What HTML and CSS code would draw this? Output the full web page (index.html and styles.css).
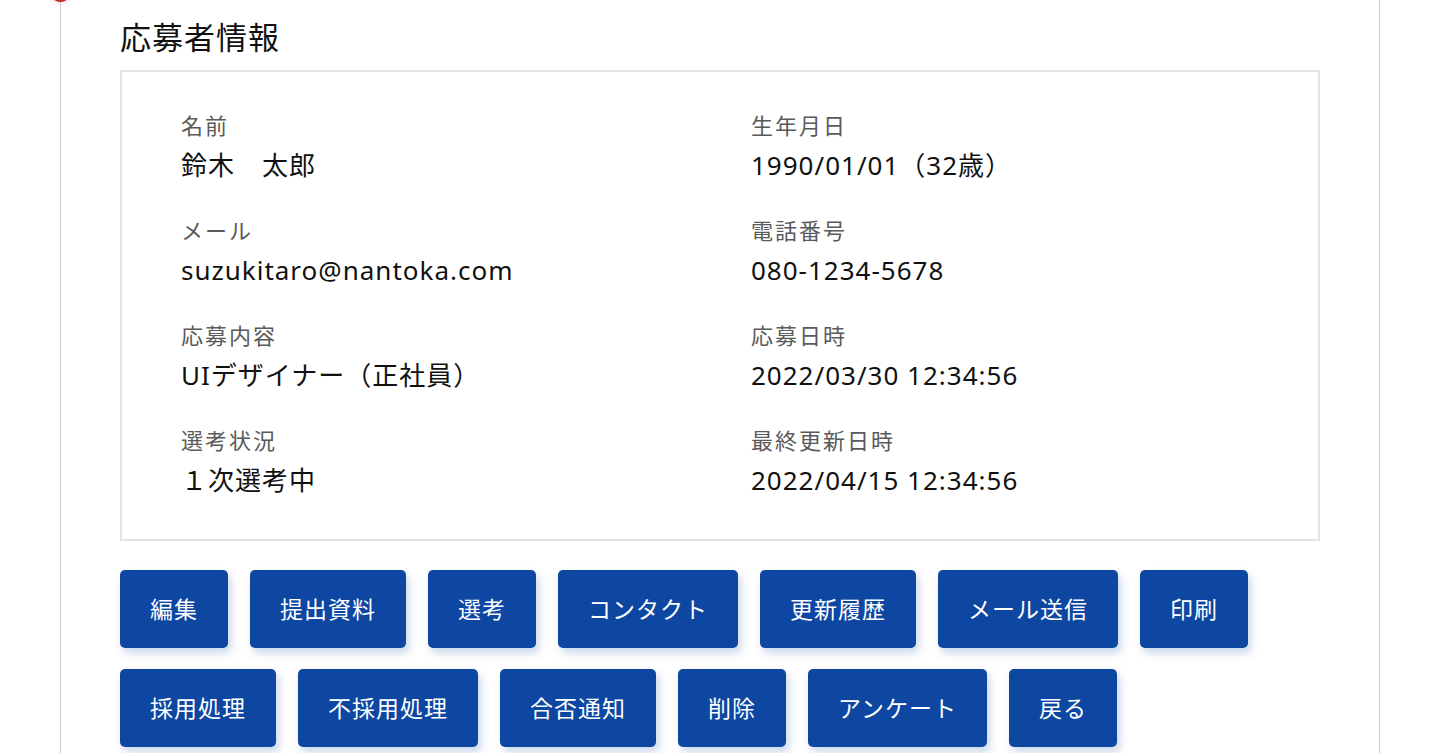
FILE: index.html
```html
<!DOCTYPE html>
<html lang="ja">
<head>
<meta charset="utf-8">
<title>応募者情報</title>
<link rel="stylesheet" href="styles.css">
</head>
<body>
<div class="panel">
  <span class="dot"></span>
  <h1 class="title">応募者情報</h1>
  <section class="card">
    <div class="field"><div class="label">名前</div><div class="value">鈴木　太郎</div></div>
    <div class="field"><div class="label">生年月日</div><div class="value">1990/01/01（32歳）</div></div>
    <div class="field"><div class="label">メール</div><div class="value">suzukitaro@nantoka.com</div></div>
    <div class="field"><div class="label">電話番号</div><div class="value">080-1234-5678</div></div>
    <div class="field"><div class="label">応募内容</div><div class="value">UIデザイナー（正社員）</div></div>
    <div class="field"><div class="label">応募日時</div><div class="value">2022/03/30 12:34:56</div></div>
    <div class="field"><div class="label">選考状況</div><div class="value">１次選考中</div></div>
    <div class="field"><div class="label">最終更新日時</div><div class="value">2022/04/15 12:34:56</div></div>
  </section>
  <div class="actions">
    <button class="btn">編集</button>
    <button class="btn">提出資料</button>
    <button class="btn">選考</button>
    <button class="btn">コンタクト</button>
    <button class="btn">更新履歴</button>
    <button class="btn">メール送信</button>
    <button class="btn">印刷</button>
    <button class="btn">採用処理</button>
    <button class="btn">不採用処理</button>
    <button class="btn">合否通知</button>
    <button class="btn">削除</button>
    <button class="btn">アンケート</button>
    <button class="btn">戻る</button>
  </div>
</div>
</body>
</html>
```

FILE: styles.css
```css
html, body {
  margin: 0;
  padding: 0;
  background: #ffffff;
  height: 100%;
  overflow: hidden;
}
body {
  font-family: "Noto Sans", "Noto Sans CJK JP", sans-serif;
  color: #111111;
}
.panel {
  position: relative;
  box-sizing: border-box;
  margin-left: 60px;
  width: 1320px;
  min-height: 100%;
  border-left: 1px solid #cccccc;
  border-right: 1px solid #cccccc;
  padding: 17px 0 0 59px;
}
.dot {
  position: absolute;
  left: -11px;
  top: -19px;
  width: 21px;
  height: 21px;
  border-radius: 50%;
  background: #c62828;
  box-shadow: 0 0 6px rgba(198, 40, 40, 0.25);
}
.title {
  margin: 0 0 13px;
  font-size: 31px;
  line-height: 40px;
  font-weight: 400;
  letter-spacing: 1px;
  color: #111111;
}
.card {
  box-sizing: border-box;
  width: 1200px;
  border: 2px solid #e3e3e3;
  padding: 38px 20px 39px 59px;
  display: grid;
  grid-template-columns: 570px 1fr;
  row-gap: 30px;
}
.label {
  font-size: 22px;
  line-height: 30px;
  letter-spacing: 2px;
  color: #5a5a5a;
}
.value {
  margin-top: 5px;
  font-size: 26px;
  line-height: 40px;
  letter-spacing: 1px;
  color: #111111;
}
.actions {
  margin-top: 29px;
  width: 1200px;
  display: flex;
  flex-wrap: wrap;
  gap: 21px 22px;
}
.btn {
  height: 78px;
  padding: 0 30px;
  border: none;
  border-radius: 5px;
  background: #0d47a1;
  color: #ffffff;
  font-family: "Noto Sans", "Noto Sans CJK JP", sans-serif;
  font-size: 23px;
  line-height: 30px;
  letter-spacing: 1px;
  box-shadow: 3px 5px 9px rgba(13, 71, 161, 0.22);
}
```
